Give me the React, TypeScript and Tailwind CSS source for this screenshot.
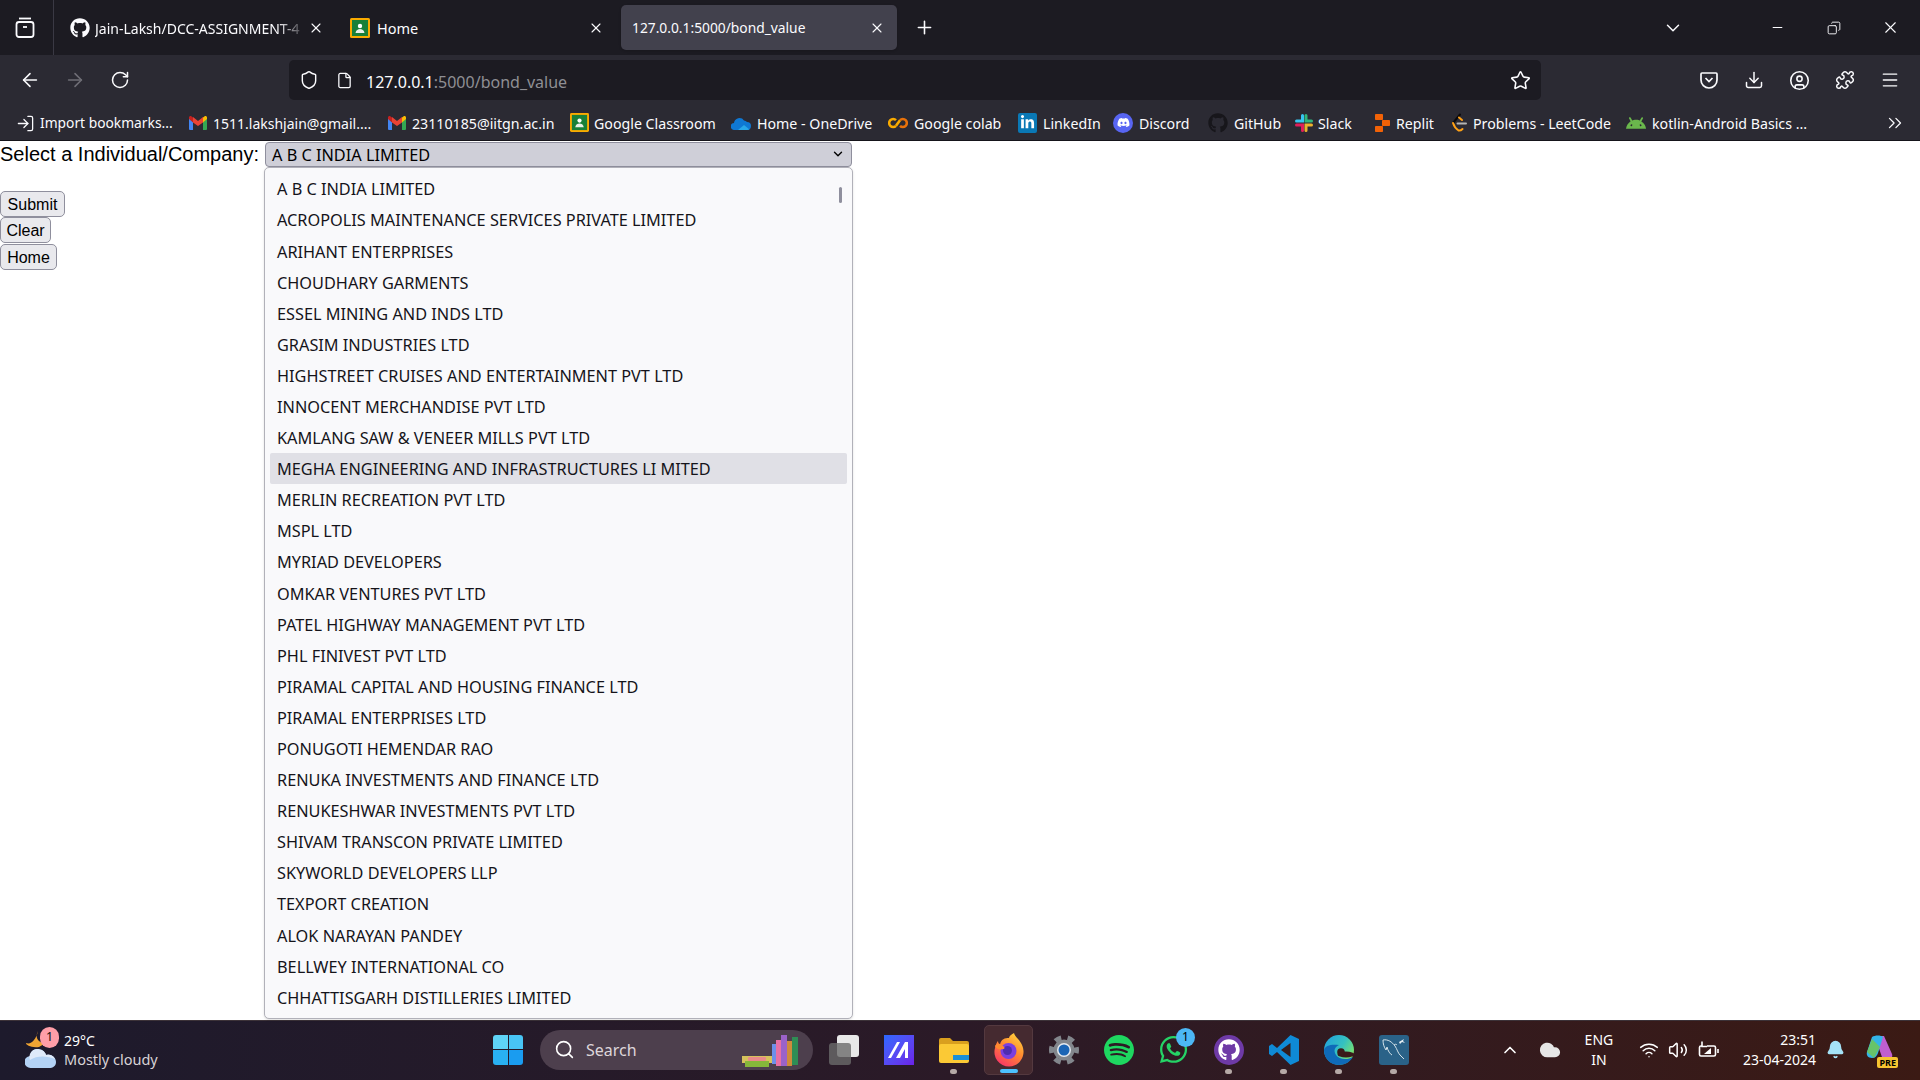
import React from "react";
import { ArrowLeft, ArrowRight, RotateCw, Shield, File, Star, Download, CircleUser, Puzzle, Menu, ChevronDown, ChevronsRight, X, Plus, Minus, Copy, Search, ChevronUp, Wifi, Volume2, Bell, Cloud, LogIn } from "lucide-react";
import { FaGithub, FaWhatsapp, FaLinkedinIn, FaDiscord } from "react-icons/fa";
import { SiSpotify, SiAndroid } from "react-icons/si";

const chrome = { fontFamily: '"Noto Sans", sans-serif' };

const rows = ["A B C INDIA LIMITED","ACROPOLIS MAINTENANCE SERVICES PRIVATE LIMITED","ARIHANT ENTERPRISES","CHOUDHARY GARMENTS","ESSEL MINING AND INDS LTD","GRASIM INDUSTRIES LTD","HIGHSTREET CRUISES AND ENTERTAINMENT PVT LTD","INNOCENT MERCHANDISE PVT LTD","KAMLANG SAW & VENEER MILLS PVT LTD","MEGHA ENGINEERING AND INFRASTRUCTURES LI MITED","MERLIN RECREATION PVT LTD","MSPL LTD","MYRIAD DEVELOPERS","OMKAR VENTURES PVT LTD","PATEL HIGHWAY MANAGEMENT PVT LTD","PHL FINIVEST PVT LTD","PIRAMAL CAPITAL AND HOUSING FINANCE LTD","PIRAMAL ENTERPRISES LTD","PONUGOTI HEMENDAR RAO","RENUKA INVESTMENTS AND FINANCE LTD","RENUKESHWAR INVESTMENTS PVT LTD","SHIVAM TRANSCON PRIVATE LIMITED","SKYWORLD DEVELOPERS LLP","TEXPORT CREATION","ALOK NARAYAN PANDEY","BELLWEY INTERNATIONAL CO","CHHATTISGARH DISTILLERIES LIMITED"];

const Gmail = () => (
  <svg width="18" height="14" viewBox="0 0 18 14"><path d="M0 2v11a1 1 0 0 0 1 1h3V6z" fill="#4285f4"/><path d="M18 2v11a1 1 0 0 1-1 1h-3V6z" fill="#34a853"/><path d="M4 6.500V1L9 5l5-4v5.500L9 10z" fill="#ea4335"/><path d="M0 3V1.500C0 .3 1.400-.4 2.300.3L4 1.600V6.500z" fill="#c5221f"/><path d="M18 3V1.500C18 .3 16.600-.4 15.700.3L14 1.600V6.500z" fill="#fbbc04"/></svg>
);
const Classroom = ({ s = 19 }: { s?: number }) => (
  <svg width={s} height={s} viewBox="0 0 20 20"><rect width="20" height="20" rx="1.500" fill="#f9ab00"/><rect x="2" y="2" width="16" height="16" fill="#188038"/><circle cx="10" cy="8" r="2.200" fill="#fff"/><path d="M5.500 15c.5-3 2.500-4 4.500-4s4 1 4.500 4z" fill="#e8f0e8"/></svg>
);
const OneDrive = () => (
  <svg width="20" height="14" viewBox="0 0 20 14"><path d="M3.500 14A3.500 3.500 0 0 1 3 7a5.500 5.500 0 0 1 10-2.500A4.500 4.500 0 0 1 16 6a4 4 0 0 1 0 8z" fill="#0f78d4"/><path d="M7 14l6-5 5.500 4.500c-.6.3-1.500.5-2.500.5z" fill="#28a8ea"/></svg>
);
const Colab = () => (
  <svg width="20" height="12" viewBox="0 0 20 12" fill="none" stroke="#f9ab00" strokeWidth="2.600"><path d="M8 3.200a4 4 0 1 0 0 5.600" /><path d="M12 3.200a4 4 0 1 1 0 5.600" stroke="#e8710a"/><path d="M8 8.800l4-5.600" stroke="#f9ab00"/></svg>
);
const Slack = () => (
  <svg width="20" height="20" viewBox="0 0 20 20" fill="none" strokeWidth="3" strokeLinecap="round"><path d="M8.500 2.500v5.500H2.500" stroke="#36c5f0"/><path d="M12 2.500v5.500h5.500" stroke="#2eb67d"/><path d="M12 17.500V12h5.500" stroke="#ecb22e"/><path d="M8.500 17.500V12H2.500" stroke="#e01e5a"/></svg>
);
const Replit = () => (
  <svg width="15" height="18" viewBox="0 0 15 18" fill="#f26207"><rect x="0" y="0" width="8" height="6" rx=".8"/><rect x="7" y="6" width="8" height="6" rx=".8"/><rect x="0" y="12" width="8" height="6" rx=".8"/></svg>
);
const LeetCode = () => (
  <svg width="17" height="20" viewBox="0 0 17 20" fill="none" strokeWidth="2" strokeLinecap="round"><path d="M10 1.500L3 10" stroke="#0b0a0d"/><path d="M3 10c1 3 3 6 5.500 7.500 2 .5 3-.5 4-1.500" stroke="#ffa116"/><path d="M9 4.500l3 2.500" stroke="#ffa116"/><path d="M7.500 10.500H16" stroke="#b3b3b3"/></svg>
);

type B = { w: number; gap?: number; size?: string; icon: React.ReactNode; text: string };
const bookmarks: B[] = [
  { w: 173, gap: 5, size: "text-[13.800px]", icon: <LogIn size={19} strokeWidth={1.600} className="text-[#fbfbfe]" />, text: "Import bookmarks..." },
  { w: 199, size: "text-[14px]", icon: <Gmail />, text: "1511.lakshjain@gmail...." },
  { w: 182, icon: <Gmail />, text: "23110185@iitgn.ac.in" },
  { w: 161, gap: 5, icon: <Classroom />, text: "Google Classroom" },
  { w: 157, icon: <OneDrive />, text: "Home - OneDrive" },
  { w: 130, icon: <Colab />, text: "Google colab" },
  { w: 95, icon: <span className="flex h-5 w-[19px] items-center justify-center rounded-[2px] bg-[#0a78b5]"><FaLinkedinIn size={15} className="text-white" /></span>, text: "LinkedIn" },
  { w: 95, icon: <span className="flex h-5 w-5 items-center justify-center rounded-full bg-[#5865f2]"><FaDiscord size={13} className="text-white" /></span>, text: "Discord" },
  { w: 86, icon: <FaGithub size={20} className="text-[#17161b]" />, text: "GitHub" },
  { w: 81, gap: 4, icon: <Slack />, text: "Slack" },
  { w: 75, icon: <Replit />, text: "Replit" },
  { w: 176, icon: <LeetCode />, text: "Problems - LeetCode" },
  { w: 190, icon: <SiAndroid size={20} className="text-[#6ab74c]" />, text: "kotlin-Android Basics ..." },
];

function TabBar() {
  return (
    <div className="flex h-[55px] items-center bg-[#1c1b22] text-[#fbfbfe]" style={chrome}>
      <div className="flex h-full w-[54px] shrink-0 items-center justify-center border-r border-[#3a3944] pr-[4px]">
        <svg width="20" height="22" viewBox="0 0 20 22" fill="none" stroke="#fbfbfe" strokeWidth="1.800"><rect x="1.500" y="5" width="17" height="15" rx="2.500" /><path d="M4 1.500h12" /><path d="M8 10h4" /></svg>
      </div>
      <div className="relative flex h-full w-[283px] shrink-0 items-center pl-[16px]">
        <FaGithub size={20} />
        <span className="ml-[5px] w-[212px] overflow-hidden whitespace-nowrap pt-[2px] text-[14px] [mask-image:linear-gradient(to_right,black_86%,transparent)]">Jain-Laksh/DCC-ASSIGNMENT-4</span>
        <X size={16} strokeWidth={1.600} className="absolute left-[254px]" />
      </div>
      <div className="relative flex h-full w-[284px] shrink-0 items-center pl-[13px]">
        <Classroom s={20} />
        <span className="ml-[7px] pt-[2px] text-[14.500px]">Home</span>
        <X size={16} strokeWidth={1.600} className="absolute left-[251px]" />
      </div>
      <div className="relative flex h-[45px] w-[276px] shrink-0 items-center rounded-[5px] bg-[#42414d] pl-[11px] shadow-sm">
        <span className="pt-[2px] text-[13.800px]">127.0.0.1:5000/bond_value</span>
        <X size={16} strokeWidth={1.600} className="absolute left-[248px]" />
      </div>
      <Plus size={21} className="ml-[17px]" strokeWidth={1.800} />
      <div className="ml-auto flex items-center">
        <ChevronDown size={22} strokeWidth={1.600} className="-mr-[1px]" />
        <Minus size={15} strokeWidth={1.600} className="ml-[87px]" />
        <Copy size={14} strokeWidth={1.600} className="ml-[42px] -scale-x-100" />
        <X size={19} strokeWidth={1.400} className="ml-[40px] mr-[20px]" />
      </div>
    </div>
  );
}

function Toolbar() {
  return (
    <div className="flex h-[50px] items-center bg-[#2b2a33] pr-[20px] text-[#fbfbfe]" style={chrome}>
      <ArrowLeft size={22} strokeWidth={1.700} className="ml-[19px]" />
      <ArrowRight size={22} strokeWidth={1.700} className="ml-[23px] text-[#6f6e76]" />
      <RotateCw size={20} strokeWidth={1.800} className="ml-[24px]" />
      <div className="ml-[159px] flex h-[40px] w-[1252px] items-center rounded-[5px] bg-[#1c1b22] pl-[10px] pr-[10px]">
        <Shield size={20} strokeWidth={1.700} />
        <File size={17} strokeWidth={1.800} className="ml-[17px]" />
        <span className="ml-[13px] pt-[3px] text-[16px]">127.0.0.1<span className="text-[#8f8f94]">:5000/bond_value</span></span>
        <Star size={21} strokeWidth={1.800} className="ml-auto" />
      </div>
      <div className="ml-auto flex items-center gap-[25px]">
        <svg width="20" height="20" viewBox="0 0 20 20" fill="none" stroke="#fbfbfe" strokeWidth="1.700"><path d="M3 3h14a1 1 0 0 1 1 1v6a8 8 0 0 1-16 0V4a1 1 0 0 1 1-1z"/><path d="M6.500 8l3.500 3.500L13.500 8"/></svg>
        <Download size={20} strokeWidth={1.800} />
        <CircleUser size={21} strokeWidth={1.800} />
        <Puzzle size={20} strokeWidth={1.800} />
        <Menu size={20} strokeWidth={1.600} />
      </div>
    </div>
  );
}

function Bookmarks() {
  return (
    <div className="flex h-[36px] items-center border-b border-[#15141a] bg-[#2b2a33] pl-[16px] pt-[1px] text-[#fbfbfe]" style={chrome}>
      {bookmarks.map((b) => (
        <div key={b.text} className="flex shrink-0 items-center whitespace-nowrap" style={{ width: b.w }}>
          <span className="flex shrink-0 items-center" style={{ marginRight: b.gap ?? 6 }}>{b.icon}</span>
          <span className={`pt-[1px] ${b.size ?? "text-[14.200px]"}`}>{b.text}</span>
        </div>
      ))}
      <ChevronsRight size={22} strokeWidth={1.400} className="ml-auto mr-[14px]" />
    </div>
  );
}

function Btn({ children, w }: { children: React.ReactNode; w: number }) {
  return (
    <div className="flex h-[26px] items-center justify-center rounded-[5px] border border-[#8f8f9d] bg-[#e9e9ed] pt-[2px] text-[16px] text-black" style={{ width: w }}>{children}</div>
  );
}

function Page() {
  return (
    <div className="relative h-[879px] bg-white text-black" style={{ fontFamily: '"Liberation Sans", sans-serif' }}>
      <div className="flex h-[26px] items-center text-[20px]">
        <span className="w-[265px]">Select a Individual/Company:</span>
        <div className="flex h-[25px] w-[587px] items-center justify-between rounded-[4px] border border-[#8f8f9d] bg-[#cfcfd8] pl-[6px] pr-[6px]" style={chrome}>
          <span className="pt-[2px] text-[16.300px]">A B C INDIA LIMITED</span>
          <ChevronDown size={14} strokeWidth={2.400} />
        </div>
      </div>
      <div className="mt-[24px] flex w-[60px] flex-col items-start">
        <Btn w={65}>Submit</Btn>
        <Btn w={51}>Clear</Btn>
        <div className="mt-[1px]"><Btn w={57}>Home</Btn></div>
      </div>
      <div className="absolute left-[264px] top-[26px] h-[852px] w-[589px] overflow-hidden rounded-[5px] border border-[#b1b1b9] bg-[#f9f9fb] px-[5px] pt-[5px] shadow-sm" style={chrome}>
        {rows.map((r, i) => (
          <div key={r} className={`flex h-[31.100px] items-center rounded-[2px] pl-[7px] pt-[2px] text-[16.300px] text-[#15141a] ${i === 9 ? "bg-[#e0e0e6]" : ""}`}>{r}</div>
        ))}
        <div className="absolute left-[574px] top-[19px] h-[16px] w-[3px] rounded-full bg-[#8f8f9d]" />
      </div>
    </div>
  );
}

function App2Icon({ children, dot, active }: { children: React.ReactNode; dot?: boolean; active?: boolean }) {
  return (
    <div className={`relative flex h-[50px] w-[49px] items-center justify-center rounded-[5px] ${active ? "border border-[#54393f] bg-[#452a30]" : ""}`}>
      {children}
      {dot && <span className="absolute bottom-[1px] h-[5px] w-[7px] rounded-full bg-[#b5a9a6]" />}
      {active && <span className="absolute bottom-[1px] h-[4px] w-[18px] rounded-full bg-[#4cc2ff]" />}
    </div>
  );
}

const Weather = () => (
  <svg width="32" height="40" viewBox="0 0 32 40">
    <path d="M13 1c-3 6-1 10 6 13l-5 3C6 18 1 15 1 13c5 2 10-3 12-12z" fill="#f0a533"/>
    <path d="M6 38a6 6 0 0 1-1-12 8 8 0 0 1 7-7c4 0 8 2 9 6 6-1 10 3 10 7s-3 6-7 6z" fill="#b3d2f5"/>
    <path d="M5 30c7-5 18-4 25-1a7 7 0 0 0-9-4c-1-4-5-6-9-6a8 8 0 0 0-7 11z" fill="#dfeafa"/>
  </svg>
);

function Taskbar() {
  return (
    <div className="flex h-[60px] items-center border-t border-[#3c3238] bg-gradient-to-r from-[#1d1a2c] via-[#2b1a27] to-[#3b1a14] pb-[2px] text-white" style={chrome}>
      <div className="relative ml-[25px] flex w-[39px] items-center">
        <Weather />
        <span className="absolute left-[15px] top-[-3px] flex h-[21px] w-[19px] items-center justify-center rounded-full bg-[#ff9ea8] text-[12.500px] text-[#111]">1</span>
      </div>
      <div className="flex w-[429px] shrink-0 flex-col leading-[19px]">
        <span className="text-[14px]">29°C</span>
        <span className="text-[14.500px] text-[#d8d2d6]">Mostly cloudy</span>
      </div>
      <div className="grid h-[30px] w-[30px] shrink-0 grid-cols-2 gap-[1px]">
        <span className="rounded-tl-[3px] bg-[#5fd4f7]" /><span className="rounded-tr-[3px] bg-[#48c5f5]" /><span className="rounded-bl-[3px] bg-[#29b0f2]" /><span className="rounded-br-[3px] bg-[#1a9cf0]" />
      </div>
      <div className="relative ml-[17px] flex h-[40px] w-[273px] shrink-0 items-center rounded-full bg-[#4d3f4d] pl-[14px]">
        <Search size={21} strokeWidth={1.800} />
        <span className="ml-[11px] text-[16px] text-[#ddd6da]">Search</span>
        <svg width="68" height="36" viewBox="0 0 68 36" className="absolute right-[3px] top-[2px]">
          <rect x="0" y="24" width="30" height="7" fill="#d6c25c"/><rect x="3" y="29" width="24" height="6" fill="#86b73a"/><rect x="6" y="25" width="18" height="4" rx="1" fill="#e98a8a"/>
          <rect x="30" y="12" width="4" height="20" fill="#6d8fe8"/><rect x="34" y="8" width="5" height="26" fill="#e86fa4"/><rect x="39" y="3" width="6" height="31" fill="#9b62c9"/><rect x="45" y="9" width="5" height="25" fill="#cf8a3c"/><rect x="50" y="5" width="6" height="28" fill="#2f8d55"/>
        </svg>
      </div>
      <div className="ml-[6px] flex items-center gap-[6px]">
        <App2Icon><div className="relative h-[30px] w-[30px]"><span className="absolute right-0 top-0 h-[22px] w-[22px] rounded-[3px] bg-[#e8e8e8]" /><span className="absolute bottom-0 left-0 h-[22px] w-[22px] rounded-[3px] bg-[#6a6a6a]/80" /></div></App2Icon>
        <App2Icon><div className="flex h-[30px] w-[30px] items-center justify-center bg-gradient-to-br from-[#2868ff] to-[#6a20e8]"><svg width="22" height="16" viewBox="0 0 22 16" fill="#fff"><path d="M0 16L9 0h3L3 16zM8 16L17 0h3v16h-3V7l-5 9z"/></svg></div></App2Icon>
        <App2Icon dot><svg width="30" height="26" viewBox="0 0 30 26"><path d="M0 3a2 2 0 0 1 2-2h9l3 3h14a2 2 0 0 1 2 2v4H0z" fill="#d99f1e"/><rect y="7" width="30" height="19" rx="2" fill="#fbc935"/><rect x="14" y="18" width="16" height="5" fill="#1a8fd8"/></svg></App2Icon>
        <App2Icon active><svg width="30" height="34" viewBox="0 0 30 34"><defs><linearGradient id="ff" x1="0.800" y1="0" x2="0.200" y2="1"><stop offset="0" stopColor="#ffd53c"/><stop offset="0.450" stopColor="#ff8a30"/><stop offset="1" stopColor="#f8306a"/></linearGradient></defs><path d="M15 33.500A14.500 14.500 0 0 1 1 15c.5-3 2-6 3-7 0 2 1 3 2 3.500C7 6 11 5 15 5c0-2 2-3 5-5 1 5 9 8 9.500 18A14.500 14.500 0 0 1 15 33.500z" fill="url(#ff)"/><circle cx="14.500" cy="18" r="8" fill="#7a3fe0"/><circle cx="13.500" cy="17.500" r="4.500" fill="#4f2cb0"/><path d="M1 13c2-3 6-3 8 0 2 1 2 3 0 3-3 1-7 0-8-3z" fill="#ff8a30"/></svg></App2Icon>
        <App2Icon><svg width="30" height="30" viewBox="0 0 30 30"><circle cx="15" cy="15" r="10.500" fill="#82868c"/><circle cx="15" cy="15" r="12.500" fill="none" stroke="#82868c" strokeWidth="5" strokeDasharray="6.600 6.490" strokeDashoffset="3.300"/><circle cx="15" cy="15" r="7" fill="#e4e9ef"/><circle cx="15" cy="15" r="5.500" fill="#1a65b5"/></svg></App2Icon>
        <App2Icon><SiSpotify size={30} className="text-[#1ed760]" /></App2Icon>
        <App2Icon>
          <FaWhatsapp size={31} className="text-[#25d366]" />
          <span className="absolute right-[3px] top-[3px] flex h-[19px] w-[19px] items-center justify-center rounded-full bg-[#4cb7f5] text-[12px] text-black">1</span>
        </App2Icon>
        <App2Icon dot><span className="flex h-[30px] w-[30px] items-center justify-center rounded-full bg-[#6e3aa6]"><FaGithub size={22} className="text-white" /></span></App2Icon>
        <App2Icon dot><svg width="30" height="30" viewBox="0 0 30 30"><path d="M21.500 0L30 4v22l-8.500 4L8 17l-5 4-3-2v-8l3-2 5 4z" fill="#0f8ad6"/><path d="M21.500 8L12 15l9.500 7z" fill="#351c1c"/></svg></App2Icon>
        <App2Icon dot><svg width="30" height="30" viewBox="0 0 30 30"><defs><linearGradient id="eg" x1="0" y1="0" x2="1" y2="0.600"><stop offset="0" stopColor="#1f9fe0"/><stop offset="0.600" stopColor="#35c1c0"/><stop offset="1" stopColor="#7de36a"/></linearGradient></defs><circle cx="15" cy="15" r="15" fill="url(#eg)"/><path d="M0 15C0 24 7 30 15 30c6 0 11-3 14-8-5 3-14 3-17-2-3-5-1-8 3-10C8 9 1 10 0 15z" fill="#0f6ab8"/><ellipse cx="22" cy="19.500" rx="8.500" ry="3" fill="#3a1a1a"/><circle cx="17" cy="17" r="3.800" fill="#3a1a1a"/></svg></App2Icon>
        <App2Icon dot><svg width="30" height="30" viewBox="0 0 30 30"><rect width="30" height="30" rx="3" fill="#2a6288"/><path d="M4 5c5-1 9 2 12 6 2 3 3 7 5 9l4 4M4 5c0 4 1 7 3 10l1-3c1 4 3 7 5 8M15 10c1-1 2-1 3 0" fill="none" stroke="#d5e3ea" strokeWidth="1"/><path d="M20 7l5-3-1 2 2 2-3-1-2 2z" fill="#e6eef3"/></svg></App2Icon>
      </div>
      <div className="ml-auto flex items-center">
        <ChevronUp size={20} strokeWidth={2} />
        <Cloud size={22} fill="#e6e6e6" stroke="#e6e6e6" className="ml-[19px]" />
        <div className="ml-[16px] flex w-[44px] flex-col items-center text-[14px] leading-[20px]"><span>ENG</span><span>IN</span></div>
        <Wifi size={20} strokeWidth={1.800} className="ml-[18px]" />
        <Volume2 size={20} strokeWidth={1.800} className="ml-[9px]" />
        <svg width="22" height="20" viewBox="0 0 22 20" fill="none" stroke="#fff" strokeWidth="1.600" className="ml-[10px]"><path d="M4 6H3a1.500 1.500 0 0 0-1.500 1.500v7A1.500 1.500 0 0 0 3 16h13a1.500 1.500 0 0 0 1.500-1.500v-7A1.500 1.500 0 0 0 16 6H9"/><path d="M4 1.500v5h5" /><path d="M20 9v4" /><path d="M6 14l7-6v6z" fill="#fff" stroke="none"/></svg>
        <div className="ml-[23px] flex flex-col items-end text-[14px] leading-[20px]"><span>23:51</span><span>23-04-2024</span></div>
        <Bell size={19} fill="#a5e3f7" stroke="#a5e3f7" className="ml-[10px]" />
        <div className="relative ml-[20px] mr-[25px] h-[30px] w-[30px]">
          <svg width="30" height="26" viewBox="0 0 30 26"><path d="M9 1h10l8 18c1 3-1 6-4 6h-5L10 2z" fill="#c05fd0"/><path d="M7 2c3-2 9-2 11 0l-5 16c-1 3-3 5-6 5-4 0-6-3-5-6z" fill="#33b4e8"/><path d="M2 17l5-13 8 8-6 11z" fill="#67c46a"/></svg>
          <span className="absolute bottom-[-3px] right-[-3px] rounded-[2px] bg-[#f7c531] px-[2px] text-[9px] font-bold leading-[11px] text-black">PRE</span>
        </div>
      </div>
    </div>
  );
}

export default function App() {
  return (
    <div className="flex h-[1080px] w-[1920px] flex-col overflow-hidden">
      <TabBar />
      <Toolbar />
      <Bookmarks />
      <Page />
      <Taskbar />
    </div>
  );
}
